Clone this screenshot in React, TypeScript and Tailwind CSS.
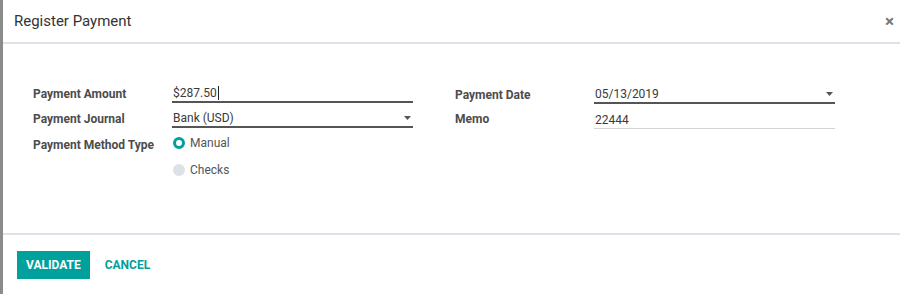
import React from "react";

function Caret() {
  return (
    <svg width="7" height="4" viewBox="0 0 7 4" className="mb-[6px] shrink-0">
      <path d="M0 0 L7 0 L3.5 4 Z" fill="#555" />
    </svg>
  );
}

function Field({
  value,
  dark = true,
  caret = false,
  cursor = false,
}: {
  value: string;
  dark?: boolean;
  caret?: boolean;
  cursor?: boolean;
}) {
  return (
    <div
      className={
        dark
          ? "flex h-[23px] w-[241px] items-end justify-between border-b-2 border-[#555] pl-[1px] pr-[2px]"
          : "flex h-[23px] w-[241px] items-end justify-between border-b border-[#d4d4d4] pl-[1px] pr-[2px]"
      }
    >
      <span className="flex items-center text-[12px] leading-[16px] text-[#3a3a3a]">
        {value}
        {cursor && <span className="ml-[1px] inline-block h-[14px] w-[1px] bg-[#222]" />}
      </span>
      {caret && <Caret />}
    </div>
  );
}

export default function App() {
  return (
    <div className="flex h-[294px] w-[900px] overflow-hidden bg-white font-['Roboto',sans-serif]">
      <div className="w-[3px] shrink-0 bg-[#8b8b8b]" />
      <div className="flex flex-1 flex-col">
        <div className="flex h-[44px] shrink-0 items-center justify-between border-b-2 border-[#dde2e8] pl-[11px] pr-[6px]">
          <span className="text-[15px] text-[#333]">Register Payment</span>
          <span className="text-[17px] font-bold leading-none text-[#777]">×</span>
        </div>

        <div className="flex flex-1 pl-[30px] pt-[36px]">
          <div className="flex flex-col">
            <div className="flex h-[25px] items-start">
              <span className="w-[139px] pt-[5px] text-[12px] font-bold text-[#4c4c4c]">Payment Amount</span>
              <Field value="$287.50" cursor />
            </div>
            <div className="flex h-[26px] items-start">
              <span className="w-[139px] pt-[5px] text-[12px] font-bold text-[#4c4c4c]">Payment Journal</span>
              <Field value="Bank (USD)" caret />
            </div>
            <div className="flex items-start pt-[3px]">
              <span className="w-[139px] pt-[2px] text-[12px] font-bold text-[#4c4c4c]">Payment Method Type</span>
              <div className="flex flex-col gap-[9px]">
                <label className="flex h-[18px] items-center gap-[5px] pl-[1px]">
                  <span className="h-[12px] w-[12px] rounded-full border-[3.5px] border-[#00a09d] bg-white" />
                  <span className="text-[12px] text-[#555]">Manual</span>
                </label>
                <label className="flex h-[18px] items-center gap-[5px] pl-[1px]">
                  <span className="h-[12px] w-[12px] rounded-full bg-[#dee2e6]" />
                  <span className="text-[12px] text-[#555]">Checks</span>
                </label>
              </div>
            </div>
          </div>

          <div className="ml-[42px] flex flex-col">
            <div className="flex h-[26px] items-start pt-[1px]">
              <span className="w-[139px] pt-[5px] text-[12px] font-bold text-[#4c4c4c]">Payment Date</span>
              <Field value="05/13/2019" caret />
            </div>
            <div className="flex h-[26px] items-start">
              <span className="w-[139px] pt-[4px] text-[12px] font-bold text-[#4c4c4c]">Memo</span>
              <Field value="22444" dark={false} />
            </div>
          </div>
        </div>

        <div className="flex h-[61px] shrink-0 items-start gap-[15px] border-t-2 border-[#dde2e8] pl-[14px] pt-[16px]">
          <button className="h-[28px] bg-[#00a09d] px-[9px] text-[12px] font-bold text-white">VALIDATE</button>
          <button className="h-[28px] text-[12px] font-bold text-[#00a09d]">CANCEL</button>
        </div>
      </div>
    </div>
  );
}
